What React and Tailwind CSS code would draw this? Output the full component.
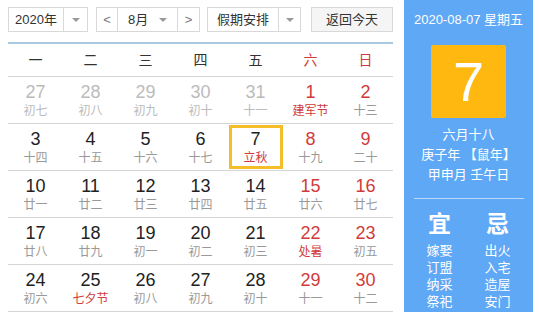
const weeks = [
  [
    { d: 27, l: '初七', o: true },
    { d: 28, l: '初八', o: true },
    { d: 29, l: '初九', o: true },
    { d: 30, l: '初十', o: true },
    { d: 31, l: '十一', o: true },
    { d: 1, l: '建军节', f: true },
    { d: 2, l: '十三' },
  ],
  [
    { d: 3, l: '十四' },
    { d: 4, l: '十五' },
    { d: 5, l: '十六' },
    { d: 6, l: '十七' },
    { d: 7, l: '立秋', f: true, sel: true },
    { d: 8, l: '十九' },
    { d: 9, l: '二十' },
  ],
  [
    { d: 10, l: '廿一' },
    { d: 11, l: '廿二' },
    { d: 12, l: '廿三' },
    { d: 13, l: '廿四' },
    { d: 14, l: '廿五' },
    { d: 15, l: '廿六' },
    { d: 16, l: '廿七' },
  ],
  [
    { d: 17, l: '廿八' },
    { d: 18, l: '廿九' },
    { d: 19, l: '初一' },
    { d: 20, l: '初二' },
    { d: 21, l: '初三' },
    { d: 22, l: '处暑', f: true },
    { d: 23, l: '初五' },
  ],
  [
    { d: 24, l: '初六' },
    { d: 25, l: '七夕节', f: true },
    { d: 26, l: '初八' },
    { d: 27, l: '初九' },
    { d: 28, l: '初十' },
    { d: 29, l: '十一' },
    { d: 30, l: '十二' },
  ],
]

const weekdays = ['一', '二', '三', '四', '五', '六', '日']

function Caret() {
  return <span className="inline-block w-0 h-0 border-x-[4px] border-x-transparent border-t-[4px] border-t-[#999]" />
}

function DayCell({ day, col }) {
  const weekend = col >= 5
  let numColor = 'text-[#222]'
  if (day.o) numColor = 'text-[#bbb]'
  else if (weekend) numColor = 'text-[#d13b3b]'
  let lunarColor = day.o ? 'text-[#bbb]' : 'text-[#999]'
  if (day.f && !day.o) lunarColor = 'text-[#d13b3b]'
  return (
    <div className="h-[46px] flex items-center justify-center">
      <div
        className={`w-[54px] h-[44px] flex flex-col items-center justify-center ${
          day.sel ? 'border-[3px] border-[#f6bd2b]' : ''
        }`}
      >
        <span className={`text-[18px] leading-[20px] ${numColor}`}>{day.d}</span>
        <span className={`text-[12px] leading-[16px] mt-[1px] ${lunarColor}`}>{day.l}</span>
      </div>
    </div>
  )
}

export default function App() {
  return (
    <div
      className="w-[533px] h-[312px] flex bg-white overflow-hidden"
      style={{ fontFamily: '"Liberation Sans", "Noto Sans CJK SC", sans-serif' }}
    >
      {/* Left: calendar */}
      <div className="w-[404px] pl-[8px] pr-[11px] flex flex-col">
        <div className="flex items-center h-[25px] mt-[7px] text-[13px] text-[#333]">
          <div className="flex h-[25px] w-[80px] border border-[#d8d8d8]">
            <div className="w-[55px] flex items-center justify-center border-r border-[#d8d8d8]">2020年</div>
            <div className="flex-1 flex items-center justify-center"><Caret /></div>
          </div>
          <div className="flex h-[25px] w-[104px] ml-[8px] border border-[#d8d8d8]">
            <div className="w-[21px] flex items-center justify-center border-r border-[#d8d8d8] text-[#777]">&lt;</div>
            <div className="flex-1 flex items-center justify-between px-[10px]">
              <span>8月</span>
              <Caret />
            </div>
            <div className="w-[22px] flex items-center justify-center border-l border-[#d8d8d8] text-[#777]">&gt;</div>
          </div>
          <div className="flex h-[25px] w-[94px] ml-[7px] border border-[#d8d8d8]">
            <div className="w-[71px] flex items-center justify-center border-r border-[#d8d8d8]">假期安排</div>
            <div className="flex-1 flex items-center justify-center"><Caret /></div>
          </div>
          <div className="h-[25px] w-[82px] ml-[10px] border border-[#d8d8d8] bg-[#f5f5f5] flex items-center justify-center">
            返回今天
          </div>
        </div>
        <div className="mt-[10px] h-[2px] bg-[#a9c9e0]" />
        <div className="grid grid-cols-7 h-[33px] border-b border-[#d5d5d5] text-[14px]">
          {weekdays.map((w, i) => (
            <div
              key={w}
              className={`flex items-center justify-center ${i >= 5 ? 'text-[#d13b3b]' : 'text-[#333]'}`}
            >
              {w}
            </div>
          ))}
        </div>
        {weeks.map((week, r) => (
          <div key={r} className="grid grid-cols-7 border-b border-[#d5d5d5]">
            {week.map((day, c) => (
              <DayCell key={c} day={day} col={c} />
            ))}
          </div>
        ))}
      </div>

      {/* Right: today panel */}
      <div className="flex-1 bg-[#5fa8f6] text-white flex flex-col items-center">
        <div className="mt-[11px] text-[13px] leading-[18px]">2020-08-07 星期五</div>
        <div className="mt-[16px] w-[75px] h-[73px] bg-[#ffb80f] rounded-[2px] flex items-center justify-center text-[56px] leading-none">
          7
        </div>
        <div className="mt-[7px] text-[13px] leading-[20px] text-center">
          <div>六月十八</div>
          <div>庚子年 【鼠年】</div>
          <div>甲申月 壬午日</div>
        </div>
        <div className="mt-[13px] w-[110px] h-[1px] bg-[#b9d9fb]" />
        <div className="mt-[10px] flex gap-[32px]">
          <div className="flex flex-col items-center">
            <div className="text-[23px] leading-[30px] font-bold">宜</div>
            <div className="text-[13px] leading-[17px] mt-[3px] text-center">
              <div>嫁娶</div>
              <div>订盟</div>
              <div>纳采</div>
              <div>祭祀</div>
            </div>
          </div>
          <div className="flex flex-col items-center">
            <div className="text-[23px] leading-[30px] font-bold">忌</div>
            <div className="text-[13px] leading-[17px] mt-[3px] text-center">
              <div>出火</div>
              <div>入宅</div>
              <div>造屋</div>
              <div>安门</div>
            </div>
          </div>
        </div>
      </div>
    </div>
  )
}
